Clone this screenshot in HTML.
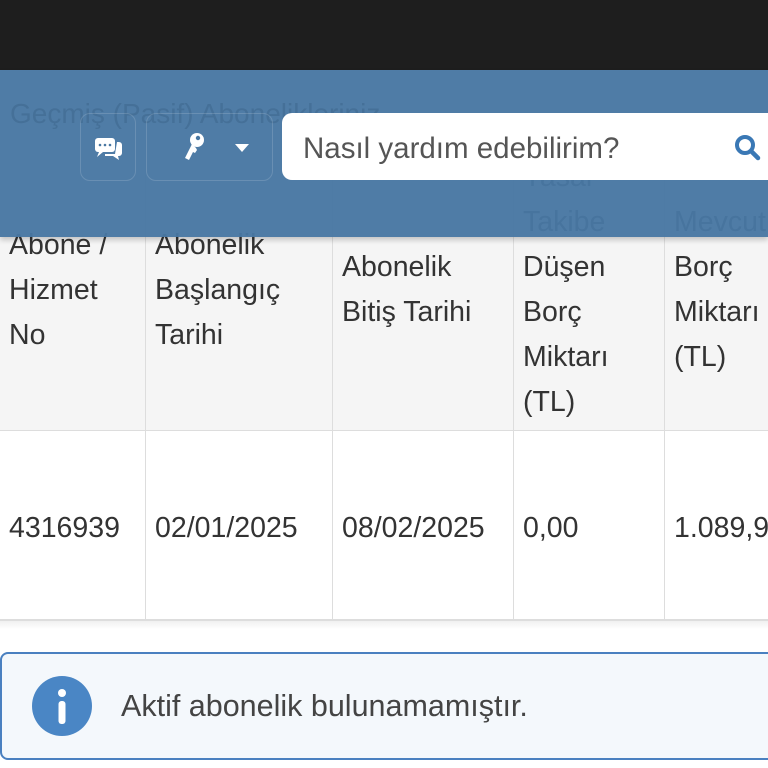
<!DOCTYPE html>
<html><head><meta charset="utf-8"><style>
body{margin:0;width:768px;height:768px;overflow:hidden;background:#fff;font-family:"Liberation Sans",sans-serif;position:relative;color:#333}
.top{position:absolute;left:0;top:0;width:768px;height:70px;background:#1e1e1e}
.c{position:absolute;box-sizing:border-box;border-right:2px solid #ddd;border-bottom:2px solid #ddd;font-size:28.5px;line-height:45px;padding-left:9px;display:flex;align-items:center}
.h{top:140px;height:292px;background:#f5f5f5;padding-top:10px}
.d{top:431px;height:190px;background:#fff;padding-top:6px}
.hdr{position:absolute;left:0;top:70px;width:768px;height:167px;background:rgba(72,119,162,.96);box-shadow:0 3px 5px rgba(0,0,0,.2)}
.ghost{position:absolute;left:10px;top:28px;font-size:28px;color:rgba(30,60,90,.18)}
.btn{position:absolute;top:43px;height:66px;border:1px solid rgba(255,255,255,.15);border-radius:10px}
.search{position:absolute;left:282px;top:43px;width:500px;height:67px;background:#fff;border-radius:10px}
.search span{position:absolute;left:21px;top:19px;font-size:29.5px;color:#555}
.alert{position:absolute;left:0;top:652px;width:780px;height:108px;border:2px solid #4a80c0;border-radius:8px;background:#f4f8fc;box-sizing:border-box}
.ic{position:absolute;left:30px;top:22px;width:60px;height:60px;border-radius:50%;background:#4a86c5}
.alert .t{position:absolute;left:119px;top:35px;font-size:30.5px;color:#444}
</style></head><body>
<div class="top"></div>
<div class="c h" style="left:0;width:147px">Abone /<br>Hizmet<br>No</div>
<div class="c h" style="left:146px;width:188px">Abonelik<br>Başlangıç<br>Tarihi</div>
<div class="c h" style="left:333px;width:182px">Abonelik<br>Bitiş Tarihi</div>
<div class="c h" style="left:514px;width:152px">Yasal<br>Takibe<br>Düşen<br>Borç<br>Miktarı<br>(TL)</div>
<div class="c h" style="left:665px;width:120px">Mevcut<br>Borç<br>Miktarı<br>(TL)</div>
<div class="c d" style="left:0;width:147px">4316939</div>
<div class="c d" style="left:146px;width:188px">02/01/2025</div>
<div class="c d" style="left:333px;width:182px">08/02/2025</div>
<div class="c d" style="left:514px;width:152px">0,00</div>
<div class="c d" style="left:665px;width:120px">1.089,90</div>
<div style="position:absolute;left:0;top:621px;width:768px;height:8px;background:linear-gradient(rgba(0,0,0,.06),rgba(0,0,0,0))"></div>
<div class="hdr">
<div class="ghost">Geçmiş (Pasif) Abonelikleriniz</div>
<div class="btn" style="left:80px;width:54px"><svg width="54" height="66" viewBox="0 0 54 66"><rect x="14" y="24" width="20" height="14" rx="3" fill="#fff"/><path d="M18 38 l-2 5 6-5z" fill="#fff"/><path d="M36 28 h2 a3 3 0 0 1 3 3 v8 a3 3 0 0 1-3 3 h-1 l1 4 -6-4 h-8 v-2 h10 z" fill="#fff"/><circle cx="19" cy="31" r="1.3" fill="#4877a2"/><circle cx="24" cy="31" r="1.3" fill="#4877a2"/><circle cx="29" cy="31" r="1.3" fill="#4877a2"/></svg></div>
<div class="btn" style="left:146px;width:125px"><svg width="125" height="66" viewBox="0 0 125 66"><circle cx="50" cy="26" r="7" fill="#fff"/><circle cx="51" cy="24" r="2.2" fill="#4877a2"/><path d="M45 30 l-7 14 4 2 4-8 2 1 2-3 -1-2z" fill="#fff"/><path d="M88 30 h14 l-7 8z" fill="#fff"/></svg></div>
<div class="search"><span>Nasıl yardım edebilirim?</span><svg style="position:absolute;left:452px;top:21px" width="28" height="28" viewBox="0 0 28 28"><circle cx="11" cy="11" r="8" fill="none" stroke="#3a78b5" stroke-width="4"/><path d="M17 17 l7 7" stroke="#3a78b5" stroke-width="4.5" stroke-linecap="round"/></svg></div>
</div>
<div class="alert"><div class="ic"><svg width="60" height="60" viewBox="0 0 60 60"><circle cx="30" cy="17" r="4" fill="#fff"/><rect x="26.5" y="25" width="7" height="23" rx="3" fill="#fff"/></svg></div><div class="t">Aktif abonelik bulunamamıştır.</div></div>
</body></html>
